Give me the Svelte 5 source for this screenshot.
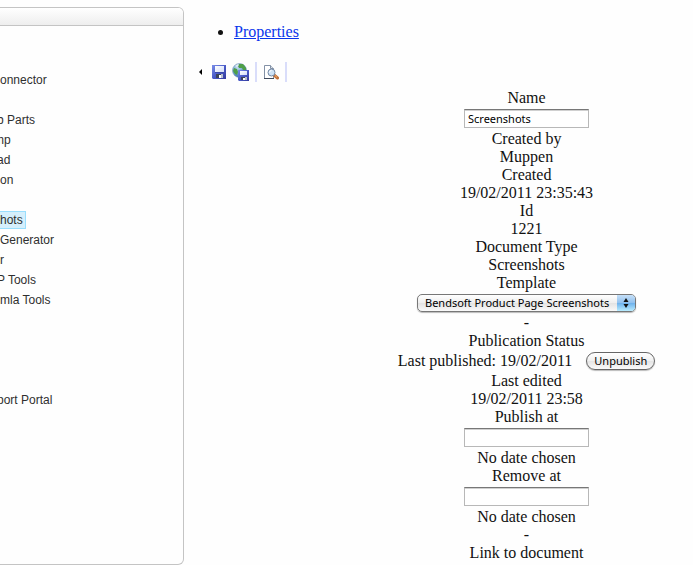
<script>
    const nodes = [
        { label: "onnector" },
        { label: "" },
        { label: "b Parts", cut: "some" },
        { label: "mp", cut: "more" },
        { label: "ad", cut: "some" },
        { label: "on" },
        { label: "" },
        { label: "hots", selected: true },
        { label: "Generator" },
        { label: "r" },
        { label: "P Tools", cut: "some" },
        { label: "mla Tools" },
        { label: "" },
        { label: "" },
        { label: "" },
        { label: "" },
        { label: "port Portal", cut: "some" },
    ];

    let name = $state("Screenshots");
    let template = $state("Bendsoft Product Page Screenshots");
    let publishAt = $state("");
    let removeAt = $state("");
</script>

<div class="layout">
    <aside class="tree">
        <div class="tree-header"></div>
        <ul class="tree-nodes">
            {#each nodes as node}
                <li>
                    {#if node.label}
                        <a
                            href="#node"
                            class={node.cut}
                            class:selected={node.selected}>{node.label}</a
                        >
                    {/if}
                </li>
            {/each}
        </ul>
    </aside>

    <main>
        <ul class="tabs">
            <li><a href="#properties">Properties</a></li>
        </ul>

        <div class="toolbar">
            <button class="scroll" aria-label="Scroll left">
                <svg width="3" height="6" viewBox="0 0 3 6">
                    <path d="M3 0v6L0 3z" fill="#000" />
                </svg>
            </button>
            <button aria-label="Save">
                <svg width="14" height="14" viewBox="0 0 14 14">
                    <defs>
                        <linearGradient id="disk" x2="1" y2="1">
                            <stop offset="0" stop-color="#7b8fe8" />
                            <stop offset="0.5" stop-color="#4a5bc8" />
                            <stop offset="1" stop-color="#343a9c" />
                        </linearGradient>
                        <linearGradient id="paper" x2="1" y2="1">
                            <stop offset="0" stop-color="#ffffff" />
                            <stop offset="1" stop-color="#d3ddf8" />
                        </linearGradient>
                    </defs>
                    <path d="M0 0h14v14H1l-1-1z" fill="url(#disk)" />
                    <path d="M3 1h9v6H3z" fill="url(#paper)" />
                    <path d="M3 7h9v1H3z" fill="#3a48a8" />
                    <path d="M4 9h7v4H4z" fill="#b9bfcd" />
                    <path d="M4 9h5v4H4z" fill="#3c4358" />
                    <path d="M7 10h2v3H7z" fill="#fff" />
                </svg>
            </button>
            <button aria-label="Save and publish">
                <svg width="17" height="18" viewBox="0 0 17 18">
                    <defs>
                        <radialGradient id="globe" cx="0.35" cy="0.3" r="0.8">
                            <stop offset="0" stop-color="#c4dcf0" />
                            <stop offset="0.5" stop-color="#6a9fd0" />
                            <stop offset="1" stop-color="#2c62a4" />
                        </radialGradient>
                    </defs>
                    <circle
                        cx="7.5"
                        cy="7.5"
                        r="7"
                        fill="url(#globe)"
                        stroke="#7d9bb8"
                        stroke-width="0.6"
                    />
                    <path
                        d="M7 1l4 0 3 4 0 3-3-1-1-2-3 0-1-2zM2 5l3 1 1 3-1 3-2-1-2-3z"
                        fill="#4f9f48"
                    />
                    <path d="M3 3l3-2 1 1-2 2z" fill="#e3eef6" />
                    <path d="M6 7h11v11H7l-1-1z" fill="url(#disk)" />
                    <path d="M8 8h7v4H8z" fill="url(#paper)" />
                    <path d="M9 14h6v3H9z" fill="#b9bfcd" />
                    <path d="M9 14h4v3H9z" fill="#3c4358" />
                    <path d="M11 15h2v2h-2z" fill="#fff" />
                </svg>
            </button>
            <span class="divider"></span>
            <button aria-label="Preview">
                <svg width="16" height="16" viewBox="0 0 16 16">
                    <path
                        d="M1.5 1.5h6l3 3v10h-9z"
                        fill="#fff"
                        stroke="#8391a6"
                    />
                    <path d="M1 14h10v1H1z" fill="#3f4a5c" />
                    <path d="M7.5 1.5v3h3" fill="#dce3e9" stroke="#8391a6" />
                    <path
                        d="M11 11l3.5 3"
                        stroke="#c0703a"
                        stroke-width="3"
                        stroke-linecap="round"
                    />
                    <path d="M12 11.5l2 1.8" stroke="#f0b070" />
                    <circle
                        cx="8.5"
                        cy="8.5"
                        r="3.5"
                        fill="#cfe3f6"
                        stroke="#7488a4"
                    />
                    <path
                        d="M6.5 8.5a2 2 0 0 1 2-2"
                        fill="none"
                        stroke="#fff"
                    />
                </svg>
            </button>
            <span class="divider"></span>
        </div>

        <form class="properties">
            <label for="name">Name</label>
            <div class="field">
                <input id="name" type="text" bind:value={name} />
            </div>
            <div>Created by</div>
            <div>Muppen</div>
            <div>Created</div>
            <div>19/02/2011 23:35:43</div>
            <div>Id</div>
            <div>1221</div>
            <div>Document Type</div>
            <div>Screenshots</div>
            <label for="template">Template</label>
            <div class="choice">
                <span class="popup">
                    <select id="template" bind:value={template}>
                        <option>Bendsoft Product Page Screenshots</option>
                    </select>
                    <svg
                        class="arrows"
                        width="18"
                        height="16"
                        viewBox="0 0 18 16"
                    >
                        <path
                            d="M9 3l2.5 4h-5zM9 13l2.5-4h-5z"
                            fill="#111"
                        />
                    </svg>
                </span>
            </div>
            <div>-</div>
            <div>Publication Status</div>
            <div class="choice">
                <span>Last published: 19/02/2011</span>
                <button type="button" class="unpublish">Unpublish</button>
            </div>
            <div>Last edited</div>
            <div>19/02/2011 23:58</div>
            <label for="publish-at">Publish at</label>
            <div class="field">
                <input id="publish-at" type="text" bind:value={publishAt} />
            </div>
            <div>No date chosen</div>
            <label for="remove-at">Remove at</label>
            <div class="field">
                <input id="remove-at" type="text" bind:value={removeAt} />
            </div>
            <div>No date chosen</div>
            <div>-</div>
            <div>Link to document</div>
        </form>
    </main>
</div>

<style>
    :global(body) {
        background: #fefefe;
    }

    .layout {
        display: flex;
        align-items: stretch;
        font: 16px/18px "Times New Roman", "Liberation Serif", serif;
        color: #111;
    }

    .tree {
        flex: 0 0 184px;
        box-sizing: border-box;
        margin-top: 7px;
        border: 1px solid #c4c4c4;
        border-width: 1px 1px 1px 0;
        border-radius: 0 6px 6px 0;
        overflow: hidden;
        font: 12px/20px Arial, "Liberation Sans", sans-serif;
    }

    .tree-header {
        height: 17px;
        border-bottom: 1px solid #c4c4c4;
        background: linear-gradient(#fff, #eee);
    }

    .tree-nodes {
        list-style: none;
        margin: 0;
        padding: 44px 0 0;
    }

    .tree-nodes li {
        height: 20px;
    }

    .tree-nodes a {
        display: inline-block;
        color: #2f2f2f;
        text-decoration: none;
    }

    .tree-nodes .some {
        margin-left: -3px;
    }

    .tree-nodes .more {
        margin-left: -6px;
    }

    .tree-nodes .selected {
        padding-right: 2px;
        border: 1px solid #99defd;
        border-left: 0;
        background: #d5effc;
        line-height: 16px;
    }

    main {
        flex: 1;
        min-width: 0;
        padding: 23px 0 3px 10px;
    }

    .tabs {
        margin: 0;
        padding-left: 40px;
    }

    .tabs a {
        color: #0a35ec;
    }

    .toolbar {
        display: flex;
        align-items: center;
        gap: 6px;
        height: 22px;
        margin: 20px 0 6px 5px;
    }

    .toolbar button {
        display: flex;
        padding: 0;
        border: 0;
        background: none;
    }

    .toolbar .scroll {
        margin-right: 4px;
    }

    .divider {
        width: 2px;
        height: 20px;
        background: #d9ddfa;
    }

    .properties {
        padding-left: 166px;
        text-align: center;
    }

    label {
        display: block;
    }

    .field,
    .choice {
        display: flex;
        align-items: center;
        justify-content: center;
        height: 23px;
    }

    .choice {
        height: 22px;
        gap: 14px;
    }

    input,
    select,
    .unpublish {
        box-sizing: border-box;
        font: 11px/14px "Lucida Grande", "Noto Sans", sans-serif;
        color: #000;
    }

    input {
        width: 125px;
        height: 19px;
        padding: 1px 3px 2px;
        border: 1px solid #b8b8b8;
        border-top-color: #777;
        background: #fff;
        box-shadow: inset 0 1px #d0d0d0;
    }

    .popup {
        position: relative;
        display: flex;
    }

    select {
        appearance: none;
        height: 18px;
        padding: 0 25px 0 7px;
        border: 1px solid #777;
        border-radius: 5px;
        background: linear-gradient(#fff, #eee 50%, #e2e2e2 50%, #fafafa);
        box-shadow: 0 1px 1px #bbb;
    }

    .arrows {
        position: absolute;
        top: 1px;
        right: 1px;
        border-radius: 0 4px 4px 0;
        background: linear-gradient(#c6e0f8, #8fc0ef 50%, #6cb0ec 50%, #b9ecff);
        pointer-events: none;
    }

    .unpublish {
        height: 18px;
        padding: 0 7px;
        border: 1px solid #666;
        border-radius: 9px;
        background: linear-gradient(#fff, #f0f0f0 50%, #e4e4e4 50%, #fafafa);
        box-shadow: 0 1px 1px #bbb;
    }
</style>
